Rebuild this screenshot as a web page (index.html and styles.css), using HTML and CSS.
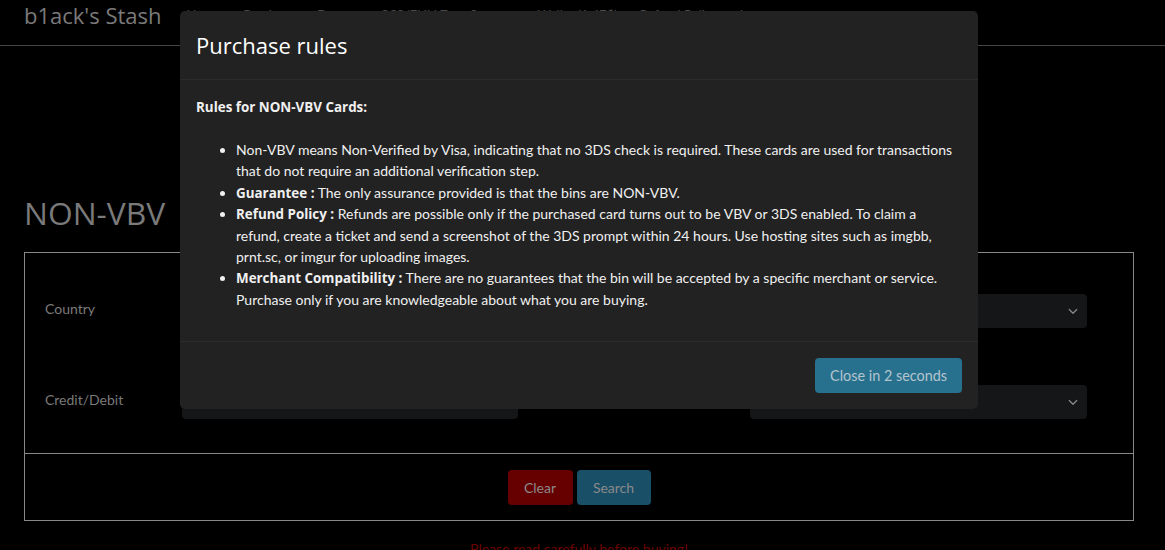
FILE: index.html
```html
<!DOCTYPE html>
<html lang="en">
<head>
<meta charset="utf-8">
<title>b1ack's Stash - NON-VBV</title>
<link rel="stylesheet" href="styles.css">
</head>
<body>
<nav class="navbar">
  <a class="brand" href="#">b1ack's Stash</a>
  <ul class="nav-links">
    <li>Home</li>
    <li>Purchase</li>
    <li>Dumps</li>
    <li>CCS/FULLZ</li>
    <li>Support</li>
    <li>Wallet (1.47$)</li>
    <li>Refund Policy</li>
    <li>Logout</li>
  </ul>
</nav>

<main class="container">
  <h1 class="page-title">NON-VBV</h1>
  <form class="search-box">
    <div class="fields">
      <label class="field-label">Country</label>
      <div class="control"></div>
      <span class="field-gap"></span>
      <div class="control select"><svg class="chev" viewBox="0 0 16 16" width="12" height="12"><path d="M3 6l5 5 5-5" fill="none" stroke="#8a8a8a" stroke-width="1.6" stroke-linecap="round" stroke-linejoin="round"/></svg></div>

      <label class="field-label">Credit/Debit</label>
      <div class="control"></div>
      <span class="field-gap"></span>
      <div class="control select"><svg class="chev" viewBox="0 0 16 16" width="12" height="12"><path d="M3 6l5 5 5-5" fill="none" stroke="#8a8a8a" stroke-width="1.6" stroke-linecap="round" stroke-linejoin="round"/></svg></div>
    </div>
    <div class="actions">
      <button type="button" class="btn btn-clear">Clear</button>
      <button type="button" class="btn btn-search">Search</button>
    </div>
  </form>
  <p class="warning">Please read carefully before buying!</p>
</main>

<div class="modal">
  <div class="modal-header">
    <h4 class="modal-title">Purchase rules</h4>
  </div>
  <div class="modal-body">
    <p class="rules-title">Rules for NON-VBV Cards:</p>
    <ul class="rules">
      <li>Non-VBV means Non-Verified by Visa, indicating that no 3DS check is required. These cards are used for transactions that do not require an additional verification step.</li>
      <li><b>Guarantee :</b> The only assurance provided is that the bins are NON-VBV.</li>
      <li><b>Refund Policy :</b> Refunds are possible only if the purchased card turns out to be VBV or 3DS enabled. To claim a refund, create a ticket and send a screenshot of the 3DS prompt within 24 hours. Use hosting sites such as imgbb, prnt.sc, or imgur for uploading images.</li>
      <li><b>Merchant Compatibility :</b> There are no guarantees that the bin will be accepted by a specific merchant or service. Purchase only if you are knowledgeable about what you are buying.</li>
    </ul>
  </div>
  <div class="modal-footer">
    <button type="button" class="btn btn-close">Close in 2 seconds</button>
  </div>
</div>
</body>
</html>
```

FILE: styles.css
```css
* { box-sizing: border-box; }
html, body { margin: 0; padding: 0; }
body {
  background: #000;
  font-family: "Lato", "Open Sans", sans-serif;
  font-size: 14px;
  color: #7a7a7a;
  height: 550px;
  overflow: hidden;
  position: relative;
}

.navbar {
  display: flex;
  align-items: flex-start;
  height: 46px;
  padding: 0 24px;
  border-bottom: 1px solid #454545;
}
.brand {
  color: #7a7a7a;
  font-family: "Open Sans", sans-serif;
  font-size: 22px;
  line-height: 30px;
  text-decoration: none;
  margin-right: 25px;
}
.nav-links {
  display: flex;
  gap: 22px;
  list-style: none;
  margin: 6px 0 0;
  padding: 0;
  color: #4a4a4a;
  font-size: 13px;
  line-height: 18px;
}

.container { width: 1134px; padding: 0 0 0 24px; }
.page-title {
  margin: 149px 0 22px;
  font-family: "Open Sans", sans-serif;
  font-size: 31.8px;
  font-weight: 400;
  line-height: 35px;
  color: #7a7a7a;
}

.search-box {
  border: 1px solid #888;
}
.fields {
  display: grid;
  grid-template-columns: 137px 336px 232px 337px;
  row-gap: 57px;
  align-items: center;
  padding: 41px 0 34px 20px;
  border-bottom: 1px solid #888;
}
.field-label { color: #7a7a7a; margin-top: -6px; }
.control {
  height: 34px;
  background: #141617;
  border-radius: 4px;
  position: relative;
}
.control.select { display: flex; align-items: center; justify-content: flex-end; padding-right: 8px; }

.actions {
  display: flex;
  justify-content: center;
  gap: 4px;
  padding: 16px 0 15px;
}
.btn {
  font-family: inherit;
  font-size: 14px;
  border: none;
  border-radius: 4px;
  height: 35px;
  padding: 0 12px;
  cursor: pointer;
}
.btn-clear { background: #660000; color: #8a8a8a; width: 65px; }
.btn-search { background: #1a4f68; color: #8a8a8a; width: 74px; }

.warning {
  text-align: center;
  color: #6b0000;
  margin: 19px 0 0;
}

.modal {
  position: absolute;
  top: 11px;
  left: 180px;
  width: 798px;
  background: #222;
  border-radius: 5px;
  color: #f0f0f0;
}
.modal-header {
  padding: 16px;
  border-bottom: 1px solid #2c2c2c;
}
.modal-title {
  margin: 0;
  font-family: "Open Sans", sans-serif;
  font-size: 22px;
  font-weight: 400;
  line-height: 36px;
  color: #fff;
}
.modal-body {
  padding: 16px;
  line-height: 21.4px;
}
.rules-title, .rules b {
  font-family: "Open Sans", sans-serif;
  font-weight: 700;
  font-size: 13.4px;
}
.rules b { line-height: 1; }
.rules-title { margin: 1px 0 21px; line-height: 21px; }
.rules { margin: 0 0 15px; padding-left: 40px; }
.modal-footer {
  border-top: 1px solid #2c2c2c;
  padding: 16px;
  display: flex;
  justify-content: flex-end;
}
.btn-close {
  background: #27718f;
  color: #b4c4cc;
  width: 147px;
  padding: 0;
  font-size: 14.4px;
}
```
